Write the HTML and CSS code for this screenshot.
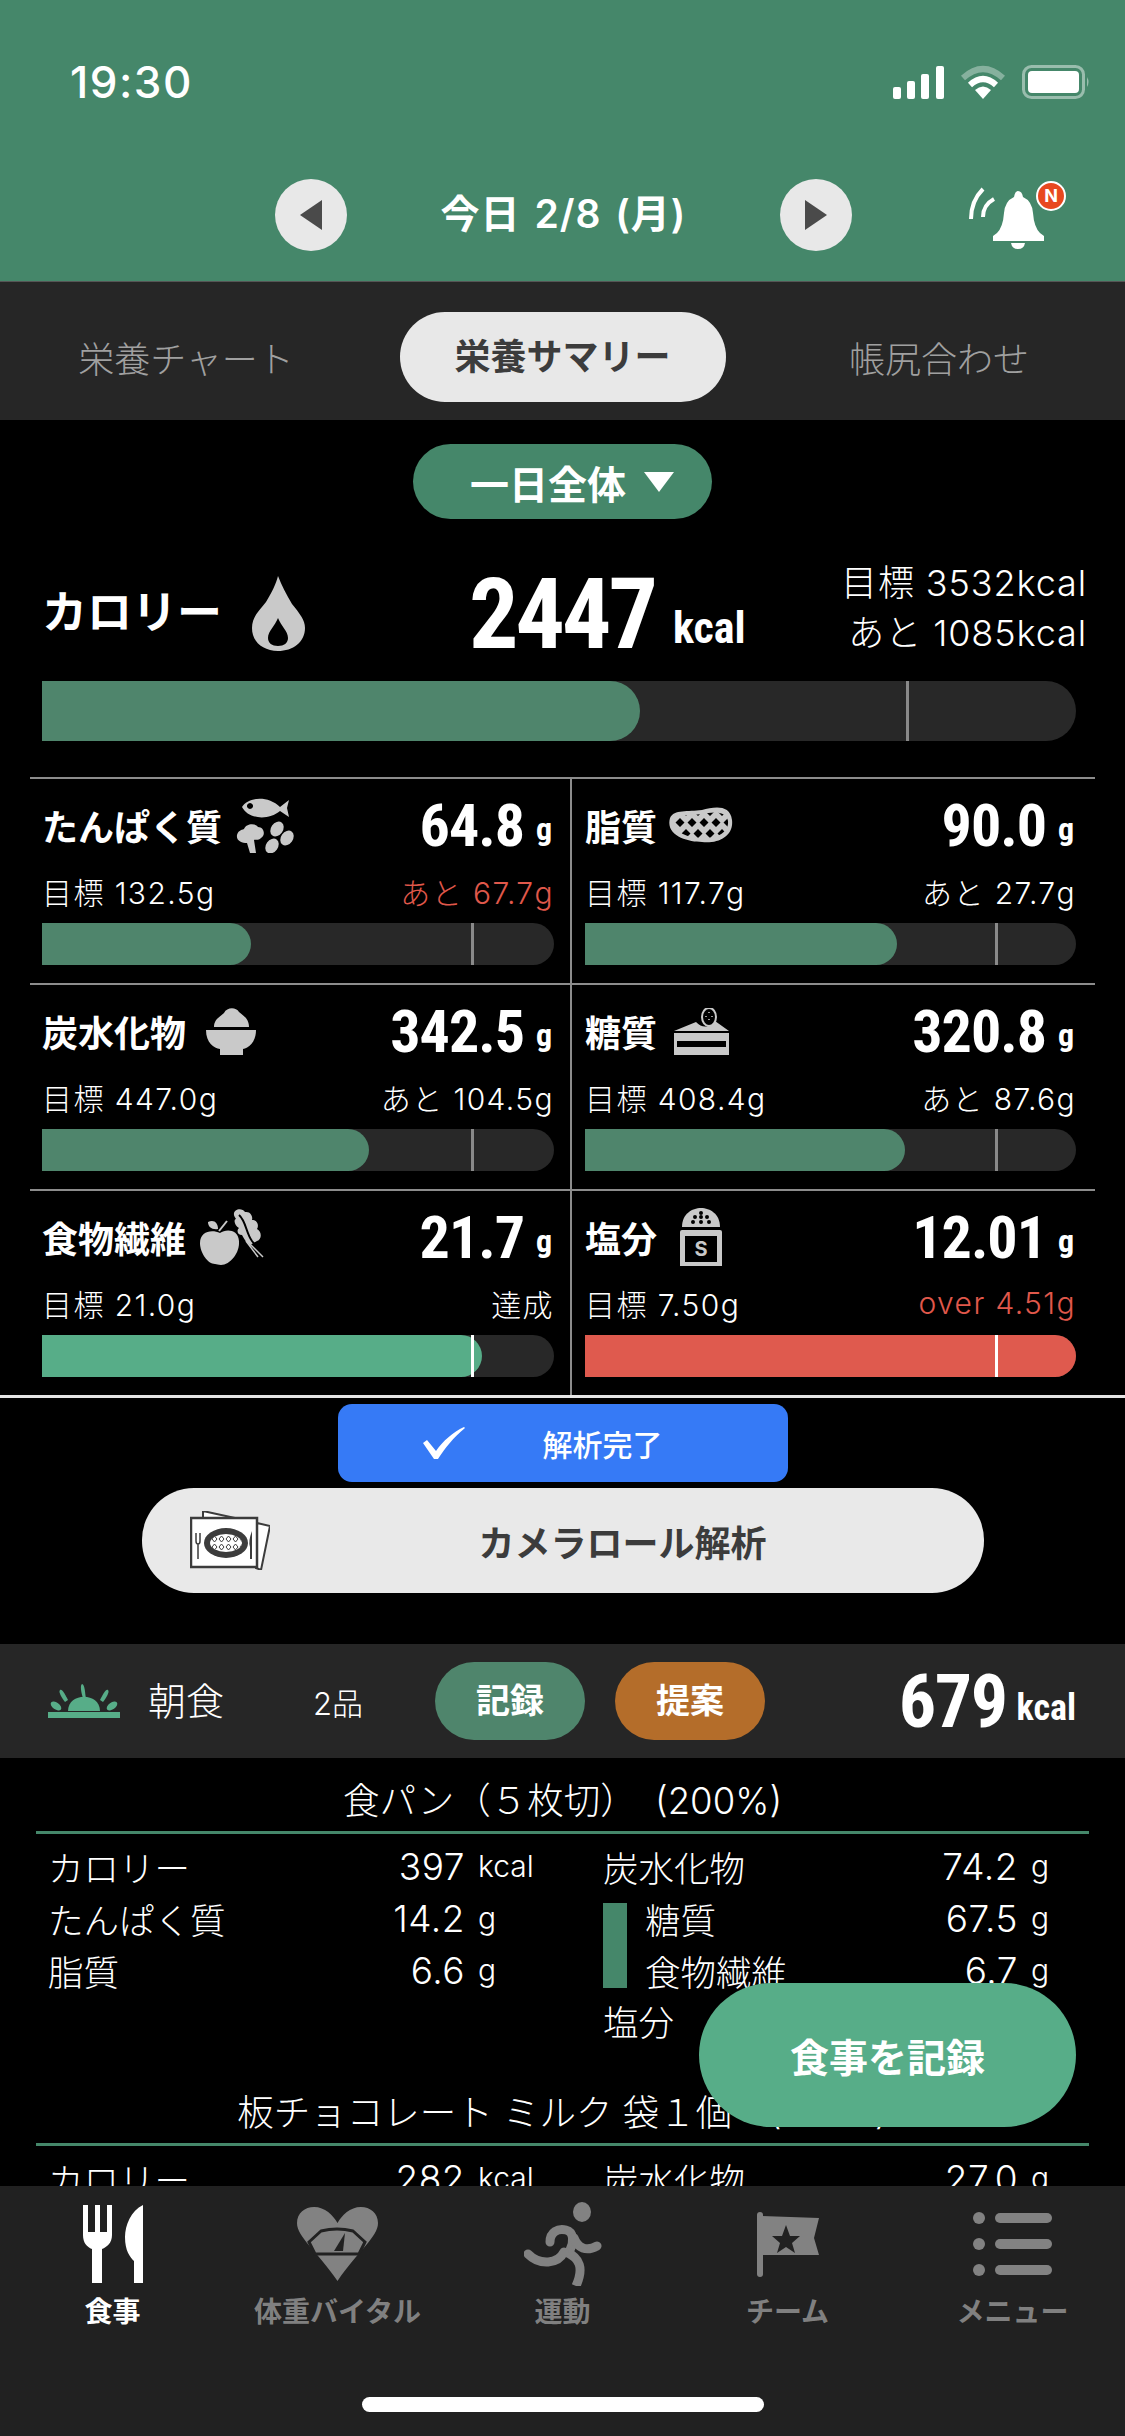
FILE: index.html
```html
<!DOCTYPE html>
<html lang="ja">

<head>
    <meta charset="UTF-8">
    <meta name="viewport" content="width=device-width, initial-scale=1.0">
    <title>栄養サマリー</title>
    <link rel="stylesheet" href="styles.css">
</head>

<body>
    <div class="phone">
        <header class="top">
            <div class="status-row">
                <span class="time">19:30</span>
                <div class="status-icons">
                    <svg width="51" height="33" viewBox="0 0 51 33" fill="#fff">
                        <rect x="0" y="21" width="8" height="12" rx="2" />
                        <rect x="14" y="15" width="8" height="18" rx="2" />
                        <rect x="28" y="8" width="8" height="25" rx="2" />
                        <rect x="43" y="0" width="8" height="33" rx="2" />
                    </svg>
                    <svg width="46" height="34" viewBox="0 0 46 34" fill="none" stroke="#fff" stroke-width="6">
                        <path d="M3 13 Q23 -5 43 13" opacity="0.35" />
                        <path d="M10 20 Q23 8 36 20" />
                        <path d="M23 34 L15 25 Q23 18 31 25 Z" fill="#fff" stroke="none" />
                    </svg>
                    <svg width="68" height="34" viewBox="0 0 68 34">
                        <rect x="1.5" y="1.5" width="60" height="31" rx="8" fill="none" stroke="#fff" stroke-width="3" opacity="0.45" />
                        <rect x="6" y="6" width="51" height="22" rx="4" fill="#fff" />
                        <path d="M65 12 Q68 17 65 22 Z" fill="#fff" opacity="0.45" />
                    </svg>
                </div>
            </div>
            <div class="date-row">
                <button class="round-button">
                    <svg width="22" height="30" viewBox="0 0 22 30"><path d="M22 0 V30 L0 15 Z" fill="#4a4a4a" /></svg>
                </button>
                <span class="date">今日 2/8 (月)</span>
                <button class="round-button">
                    <svg width="22" height="30" viewBox="0 0 22 30"><path d="M0 0 V30 L22 15 Z" fill="#4a4a4a" /></svg>
                </button>
                <div class="bell">
                    <svg width="97" height="68" viewBox="0 0 97 68">
                        <path d="M49 10 q4 0 5 6 q9 4 10 16 q1 14 7 20 l4 3 v5 H24 v-5 l4 -3 q6 -6 7 -20 q1 -12 10 -16 q1 -6 4 -6z" fill="#fff" />
                        <path d="M42 62 h14 q-1 6 -7 6 q-6 0 -7 -6z" fill="#fff" />
                        <path d="M14 8 Q2 20 2 38 M25 18 Q14 24 14 36" fill="none" stroke="#fff" stroke-width="4" />
                    </svg>
                    <span class="badge">N</span>
                </div>
            </div>
        </header>

        <nav class="tabs">
            <span class="tab">栄養チャート</span>
            <span class="tab tab-active">栄養サマリー</span>
            <span class="tab">帳尻合わせ</span>
        </nav>

        <main class="content">
            <div class="range-row">
                <div class="range-button">一日全体<span class="range-arrow"></span></div>
            </div>

            <section class="calorie-row">
                <span class="calorie-name">カロリー</span>
                <svg class="calorie-icon" width="53" height="75" viewBox="0 0 53 75">
                    <path fill-rule="evenodd" d="M26 0 C30 10 34 18 40 28 C48 38 53 44 53 52 C53 66 41 75 26 75 C11 75 0 66 0 52 C0 40 8 34 14 26 C20 16 24 8 26 0z M26 42 c3 8 10 13 10 20 c0 5 -4 8 -10 8 s-10 -3 -10 -8 c0 -7 7 -12 10 -20z" fill="#c9c9c9" />
                </svg>
                <span class="calorie-value">2447</span>
                <span class="calorie-unit">kcal</span>
                <div class="calorie-goal">
                    <div>目標 3532kcal</div>
                    <div>あと 1085kcal</div>
                </div>
            </section>
            <div class="bar bar-large">
                <div class="bar-fill" style="width: 57.8%"></div>
                <div class="bar-mark" style="left: 83.6%"></div>
            </div>

            <section class="nutrient-grid">
                <div class="cell cell-left">
                    <div class="name-row">
                        <span class="name">たんぱく質</span>
                        <svg class="icon-protein" width="58" height="56" viewBox="0 0 58 56" fill="#c9c9c9">
                            <path fill-rule="evenodd" d="M6 10 C12 0 32 -2 44 10 L53 3 L51 11 L53 20 L44 14 C32 24 12 22 6 10z M14 6 a3 3 0 1 0 0.01 0z" />
                            <path d="M8 32 C10 26 20 26 22 30 C28 30 30 38 25 41 C22 44 19 42 18 43 L20 56 H14 L11 46 C6 46 0 44 1 38 C2 34 5 33 8 32z" />
                            <ellipse cx="41" cy="32" rx="6" ry="8" transform="rotate(35 41 32)" />
                            <ellipse cx="51" cy="41" rx="6" ry="8" transform="rotate(35 51 41)" />
                            <ellipse cx="36" cy="49" rx="6" ry="8" transform="rotate(35 36 49)" />
                        </svg>
                        <span class="value">64.8</span><span class="unit">g</span>
                    </div>
                    <div class="sub-row"><span>目標 132.5g</span><span class="warn">あと 67.7g</span></div>
                    <div class="bar">
                        <div class="bar-fill" style="width: 40.8%"></div>
                        <div class="bar-mark" style="left: 83.7%"></div>
                    </div>
                </div>
                <div class="cell cell-right">
                    <div class="name-row">
                        <span class="name">脂質</span>
                        <svg class="icon-steak" width="65" height="38" viewBox="0 0 65 38">
                            <defs>
                                <pattern id="lattice" width="12" height="22" patternUnits="userSpaceOnUse">
                                    <path d="M6 1 L10.5 5.5 L6 10 L1.5 5.5 Z M0 12 L4.5 16.5 L0 21 Z M12 12 L12 21 L7.5 16.5 Z" fill="#000" />
                                </pattern>
                            </defs>
                            <path d="M2 12 C6 3 20 6 34 4 C46 1 62 -2 64 14 C66 30 50 38 34 36 C20 36 -3 30 2 12z" fill="#c9c9c9" />
                            <path d="M7 13 C10 8 22 10 34 8 C44 6 58 4 60 15 C61 27 48 33 34 32 C22 32 3 27 7 13z" fill="url(#lattice)" />
                        </svg>
                        <span class="value">90.0</span><span class="unit">g</span>
                    </div>
                    <div class="sub-row"><span>目標 117.7g</span><span>あと 27.7g</span></div>
                    <div class="bar">
                        <div class="bar-fill" style="width: 63.6%"></div>
                        <div class="bar-mark" style="left: 83.5%"></div>
                    </div>
                </div>

                <div class="cell cell-left">
                    <div class="name-row">
                        <span class="name">炭水化物</span>
                        <svg class="icon-rice" width="50" height="48" viewBox="0 0 50 48" fill="#c9c9c9">
                            <path d="M8 20 C8 12 14 10 18 6 C21 0 30 0 33 5 C38 9 43 12 43 20 z" />
                            <path d="M0 23 H50 C50 36 42 41 37 42 V48 H14 V42 C8 41 0 36 0 23z" />
                        </svg>
                        <span class="value">342.5</span><span class="unit">g</span>
                    </div>
                    <div class="sub-row"><span>目標 447.0g</span><span>あと 104.5g</span></div>
                    <div class="bar">
                        <div class="bar-fill" style="width: 63.9%"></div>
                        <div class="bar-mark" style="left: 83.7%"></div>
                    </div>
                </div>
                <div class="cell cell-right">
                    <div class="name-row">
                        <span class="name">糖質</span>
                        <svg class="icon-cake" width="55" height="47" viewBox="0 0 55 47">
                            <path d="M0 23 L22 14 Q28 20 34 18 Q38 17 41 13 L55 23 Z" fill="#c9c9c9" />
                            <ellipse cx="35" cy="9" rx="7" ry="9" fill="#000" stroke="#c9c9c9" stroke-width="2" />
                            <path d="M35 4 v1 M32 8 v1 M38 8 v1 M35 11 v1" stroke="#c9c9c9" stroke-width="1.5" />
                            <path fill-rule="evenodd" d="M0 25 H55 V47 H0 Z M3 33 V39 H52 V33 Z" fill="#c9c9c9" />
                        </svg>
                        <span class="value">320.8</span><span class="unit">g</span>
                    </div>
                    <div class="sub-row"><span>目標 408.4g</span><span>あと 87.6g</span></div>
                    <div class="bar">
                        <div class="bar-fill" style="width: 65.2%"></div>
                        <div class="bar-mark" style="left: 83.5%"></div>
                    </div>
                </div>

                <div class="cell cell-left">
                    <div class="name-row">
                        <span class="name">食物繊維</span>
                        <svg class="icon-apple" width="64" height="56" viewBox="0 0 64 56" fill="#c9c9c9">
                            <path d="M20 24 C26 20 38 20 39 32 C40 44 30 56 21 56 C18 56 17 55 15 55 C8 55 0 44 0 34 C0 22 12 20 20 24z" />
                            <path d="M8 13 C14 10 18 14 18 20 C12 21 8 18 8 13z" />
                            <path d="M19 22 L27 12" stroke="#c9c9c9" stroke-width="2" />
                            <path d="M34 6 C33 0 42 -2 45 3 C51 2 53 8 52 11 C58 11 59 17 57 20 C62 23 62 30 57 32 L50 36 C46 33 44 30 42 26 C38 26 36 22 39 19 C35 17 33 11 36 10 C35 8 34 7 34 6z" />
                            <path d="M39 6 C46 12 46 24 52 32 L63 46" fill="none" stroke="#000" stroke-width="2" />
                            <path d="M50 35 L63 48 M46 32 L58 48" fill="none" stroke="#c9c9c9" stroke-width="1.5" />
                        </svg>
                        <span class="value">21.7</span><span class="unit">g</span>
                    </div>
                    <div class="sub-row"><span>目標 21.0g</span><span>達成</span></div>
                    <div class="bar">
                        <div class="bar-fill bar-fill-done" style="width: 86%"></div>
                        <div class="bar-mark bar-mark-light" style="left: 83.7%"></div>
                    </div>
                </div>
                <div class="cell cell-right">
                    <div class="name-row">
                        <span class="name">塩分</span>
                        <div class="icon-shaker">
                            <svg width="42" height="58" viewBox="0 0 42 58">
                                <path d="M2 19 C2 6 12 0 21 0 C30 0 40 6 40 19z" fill="#c9c9c9" />
                                <path d="M21 5 v0 M15 9 v0 M21 9 v0 M27 9 v0 M13 14 v0 M21 14 v0 M29 14 v0" stroke="#000" stroke-width="4" stroke-linecap="round" />
                                <path d="M0 24 Q0 22 2 22 H40 Q42 22 42 24 V58 H0 Z" fill="#c9c9c9" />
                                <rect x="5" y="28" width="32" height="26" fill="#000" />
                            </svg>
                            <span class="shaker-letter">S</span>
                        </div>
                        <span class="value">12.01</span><span class="unit">g</span>
                    </div>
                    <div class="sub-row"><span>目標 7.50g</span><span class="warn">over 4.51g</span></div>
                    <div class="bar">
                        <div class="bar-fill bar-fill-over" style="width: 100%"></div>
                        <div class="bar-mark bar-mark-light" style="left: 83.5%"></div>
                    </div>
                </div>
            </section>

            <div class="done-row">
                <div class="done-button">
                    <svg width="42" height="32" viewBox="0 0 42 32"><path d="M0 16 L4 13 L13 24 C20 14 30 5 41 0 L42 1 C30 11 22 21 15 32 H11 Z" fill="#fff" /></svg>
                    <span>解析完了</span>
                </div>
            </div>
            <div class="camera-row">
                <div class="camera-button">
                    <svg width="80" height="59" viewBox="0 0 80 59">
                        <defs>
                            <pattern id="lattice-small" width="7" height="8" patternUnits="userSpaceOnUse">
                                <path d="M3.5 1 L6 4 L3.5 7 L1 4 Z" fill="none" stroke="#3c3c3c" stroke-width="1" />
                            </pattern>
                        </defs>
                        <path d="M13 0 L45 7 H13 Z" fill="#fff" stroke="#3c3c3c" stroke-width="2" />
                        <path d="M67 12 L80 15 L71 59 L66 57 Z" fill="#fff" stroke="#3c3c3c" stroke-width="2" />
                        <rect x="1" y="7" width="66" height="49" fill="#fff" stroke="#3c3c3c" stroke-width="2.5" />
                        <ellipse cx="36" cy="32" rx="22" ry="15" fill="#3c3c3c" />
                        <ellipse cx="36" cy="32" rx="16" ry="9" fill="#fff" />
                        <ellipse cx="36" cy="32" rx="16" ry="9" fill="url(#lattice-small)" />
                        <path d="M6 22 V30 Q6 33 8 33 V48 M10 22 V30 Q10 33 8 33" fill="none" stroke="#3c3c3c" stroke-width="1.5" />
                        <path d="M62 20 Q58 30 60 36 V48 H62 Z" fill="#3c3c3c" />
                    </svg>
                    <span class="camera-label">カメラロール解析</span>
                </div>
            </div>

            <section class="meal-head">
                <svg class="meal-icon" width="72" height="34" viewBox="0 0 72 34" fill="#57ad88">
                    <rect x="0" y="28" width="72" height="6" />
                    <path d="M20 27 C20 8 52 8 52 27 Z" />
                    <path d="M25 2 C28 2 28 12 29 16 L26 16 C24 10 23 3 25 2z" transform="translate(9 -2)" />
                    <path d="M12 6 C14 4 18 12 20 16 L17 18 C14 14 10 8 12 6z" />
                    <path d="M60 6 C58 4 54 12 52 16 L55 18 C58 14 62 8 60 6z" />
                    <ellipse cx="8" cy="22" rx="6" ry="3.5" transform="rotate(35 8 22)" />
                    <ellipse cx="64" cy="22" rx="6" ry="3.5" transform="rotate(-35 64 22)" />
                </svg>
                <span class="meal-name">朝食</span>
                <span class="meal-count">2品</span>
                <span class="meal-button meal-record">記録</span>
                <span class="meal-button meal-suggest">提案</span>
                <span class="meal-kcal">679</span><span class="meal-unit">kcal</span>
            </section>

            <section class="food">
                <h2 class="food-title">食パン（５枚切）　(200%)</h2>
                <div class="food-table">
                    <div class="food-col">
                        <div class="food-line"><span class="food-label">カロリー</span><span class="food-value">397</span><span class="food-unit food-unit-kcal">kcal</span></div>
                        <div class="food-line"><span class="food-label">たんぱく質</span><span class="food-value">14.2</span><span class="food-unit">g</span></div>
                        <div class="food-line"><span class="food-label">脂質</span><span class="food-value">6.6</span><span class="food-unit">g</span></div>
                    </div>
                    <div class="food-col">
                        <div class="food-line"><span class="food-label">炭水化物</span><span class="food-value">74.2</span><span class="food-unit">g</span></div>
                        <div class="food-group">
                            <div class="food-mark"></div>
                            <div class="food-group-lines">
                                <div class="food-line"><span class="food-label">糖質</span><span class="food-value">67.5</span><span class="food-unit">g</span></div>
                                <div class="food-line"><span class="food-label">食物繊維</span><span class="food-value">6.7</span><span class="food-unit">g</span></div>
                            </div>
                        </div>
                        <div class="food-line food-line-last"><span class="food-label">塩分</span><span class="food-value">1.5</span><span class="food-unit">g</span></div>
                    </div>
                </div>
            </section>

            <section class="food">
                <h2 class="food-title">板チョコレート ミルク 袋１個　(100%)</h2>
                <div class="food-table">
                    <div class="food-col">
                        <div class="food-line"><span class="food-label">カロリー</span><span class="food-value">282</span><span class="food-unit food-unit-kcal">kcal</span></div>
                    </div>
                    <div class="food-col">
                        <div class="food-line"><span class="food-label">炭水化物</span><span class="food-value">27.0</span><span class="food-unit">g</span></div>
                    </div>
                </div>
            </section>
        </main>

        <button class="record-button">食事を記録</button>

        <footer class="bottom-nav">
            <div class="nav-items">
                <div class="nav-item nav-item-active">
                    <div class="nav-icon">
                        <svg width="60" height="78" viewBox="0 0 60 78" fill="#fff">
                            <path d="M0 0 H5 V27 H12 V0 H17 V27 H24 V0 H29 V30 C29 38 24 42 19 44 V78 H9 V44 C4 42 0 38 0 30 Z" />
                            <path d="M60 0 C48 6 42 20 42 32 C42 46 47 52 51 56 V78 H60 Z" />
                        </svg>
                    </div>
                    <span>食事</span>
                </div>
                <div class="nav-item">
                    <div class="nav-icon">
                        <svg width="81" height="74" viewBox="0 0 81 74">
                            <path d="M40.5 74 C20 44 0 30 0 16 C0 6 8 0 17 0 C28 0 36 8 40.5 16 C45 8 53 0 64 0 C73 0 81 6 81 16 C81 30 61 44 40.5 74z" fill="#828282" />
                            <path d="M12 35 L24 24 Q40 20 56 24 L68 35 L62 47 H18 Z" fill="none" stroke="#212121" stroke-width="3" />
                            <path d="M48 26 L37 44 H46 Z" fill="#212121" />
                        </svg>
                    </div>
                    <span>体重バイタル</span>
                </div>
                <div class="nav-item">
                    <div class="nav-icon">
                        <svg width="78" height="84" viewBox="0 0 78 84" fill="none" stroke="#828282" stroke-width="9" stroke-linecap="round">
                            <ellipse cx="58" cy="10" rx="9" ry="10" fill="#828282" stroke="none" />
                            <path d="M26 40 C26 30 34 26 42 28 C50 30 50 40 46 48" />
                            <path d="M50 36 C54 46 62 50 73 44" />
                            <path d="M42 50 C56 56 60 66 52 84" stroke-linecap="butt" />
                            <path d="M40 50 C34 62 16 64 4 52" />
                        </svg>
                    </div>
                    <span>運動</span>
                </div>
                <div class="nav-item">
                    <div class="nav-icon">
                        <svg width="62" height="65" viewBox="0 0 62 65">
                            <rect x="0" y="0" width="6" height="65" rx="3" fill="#828282" />
                            <path d="M5 4 L62 6 L57 26 L62 43 H5 Z" fill="#828282" />
                            <path d="M29 13 L33 24 L43 24 L35 31 L38 41 L29 35 L20 41 L23 31 L15 24 L25 24 Z" fill="#212121" />
                        </svg>
                    </div>
                    <span>チーム</span>
                </div>
                <div class="nav-item">
                    <div class="nav-icon">
                        <svg width="79" height="65" viewBox="0 0 79 65" fill="#828282">
                            <ellipse cx="6" cy="6" rx="6" ry="6" />
                            <rect x="22" y="1" width="57" height="10" rx="5" />
                            <ellipse cx="6" cy="32" rx="6" ry="6" />
                            <rect x="22" y="27" width="57" height="10" rx="5" />
                            <ellipse cx="6" cy="58" rx="6" ry="6" />
                            <rect x="22" y="53" width="57" height="10" rx="5" />
                        </svg>
                    </div>
                    <span>メニュー</span>
                </div>
            </div>
            <div class="home-indicator"></div>
        </footer>
    </div>
</body>

</html>
```

FILE: styles.css
```css
body {
    margin: 0;
    background-color: #000;
    font-family: Inter, 'Noto Sans CJK JP', sans-serif;
    color: #fff;
}

.phone {
    position: relative;
    display: flex;
    flex-direction: column;
    width: 1125px;
    height: 2436px;
    overflow: hidden;
}

/* header */
.top {
    flex: none;
    height: 282px;
    padding-top: 60px;
    box-sizing: border-box;
    background-color: #45876a;
    border-bottom: 1px solid #555;
}

.status-row {
    display: flex;
    justify-content: space-between;
    align-items: center;
    height: 44px;
    padding: 0 35px 0 70px;
}

.time {
    font-size: 44px;
    font-weight: 500;
    letter-spacing: 1.5px;
}

.status-icons {
    display: flex;
    align-items: center;
    gap: 16px;
}

.date-row {
    display: flex;
    align-items: center;
    margin-top: 75px;
    padding-left: 275px;
}

.round-button {
    display: flex;
    align-items: center;
    justify-content: center;
    width: 72px;
    height: 72px;
    padding: 0;
    border: none;
    border-radius: 50%;
    background-color: #e8e8e8;
}

.date {
    width: 433px;
    padding-bottom: 8px;
    text-align: center;
    font-size: 39px;
    font-weight: 600;
    letter-spacing: 1px;
    word-spacing: 3px;
}

.bell {
    position: relative;
    display: flex;
    margin-left: 117px;
}

.badge {
    position: absolute;
    top: 0;
    right: 0;
    width: 26px;
    height: 26px;
    border: 2px solid #fff;
    border-radius: 50%;
    background-color: #e8481f;
    font-size: 18px;
    font-weight: 700;
    line-height: 26px;
    text-align: center;
}

/* tabs */
.tabs {
    flex: none;
    display: grid;
    grid-template-columns: 372px 1fr 372px;
    align-items: center;
    justify-items: center;
    height: 138px;
    padding-top: 12px;
    box-sizing: border-box;
    background-color: #262626;
}

.tab {
    font-size: 36px;
    font-weight: 300;
    color: #a0a0a0;
}

.tab-active {
    width: 326px;
    height: 90px;
    border-radius: 45px;
    background-color: #e8e8e8;
    color: #3c3c3c;
    font-weight: 700;
    line-height: 90px;
    text-align: center;
}

/* scroll area */
.content {
    flex: 1;
    min-height: 0;
    overflow: hidden;
}

.range-row {
    display: flex;
    justify-content: center;
    padding-top: 24px;
}

.range-button {
    display: flex;
    align-items: center;
    justify-content: center;
    gap: 18px;
    width: 299px;
    height: 75px;
    border-radius: 38px;
    background-color: #45876a;
    font-size: 39px;
    font-weight: 700;
    padding-left: 19px;
    box-sizing: border-box;
}

.range-arrow {
    width: 0;
    height: 0;
    border-left: 15px solid transparent;
    border-right: 15px solid transparent;
    border-top: 20px solid #fff;
}

.calorie-row {
    display: flex;
    align-items: center;
    height: 162px;
    padding-left: 42px;
}

.calorie-name {
    width: 210px;
    margin-top: 18px;
    font-size: 45px;
    font-weight: 700;
}

.calorie-icon {
    flex: none;
    margin-top: 27px;
}

.calorie-value {
    width: 188px;
    margin-left: 164px;
    margin-top: 28px;
    font-family: 'Roboto Condensed', Roboto, sans-serif;
    font-stretch: 75%;
    font-size: 98px;
    font-weight: 700;
    letter-spacing: -3px;
}

.calorie-unit {
    margin-left: 16px;
    margin-top: 56px;
    font-family: 'Roboto Condensed', Roboto, sans-serif;
    font-stretch: 75%;
    font-size: 44px;
    font-weight: 700;
}

.calorie-goal {
    margin-left: auto;
    margin-top: 16px;
    padding-right: 38px;
    font-size: 36px;
    font-weight: 300;
    letter-spacing: 0.9px;
    line-height: 50px;
    text-align: right;
    white-space: nowrap;
}

.bar {
    position: relative;
    height: 42px;
    border-radius: 0 21px 21px 0;
    background-color: #282828;
}

.bar-large {
    height: 60px;
    margin: 0 49px 0 42px;
    border-radius: 0 30px 30px 0;
}

.bar-fill {
    height: 100%;
    border-radius: 0 30px 30px 0;
    background-color: #4f856c;
}

.bar-fill-done {
    background-color: #57ad88;
}

.bar-fill-over {
    background-color: #df5a4e;
}

.bar-mark {
    position: absolute;
    top: 0;
    width: 3px;
    height: 100%;
    background-color: #8a8a8a;
}

.bar-mark-light {
    background-color: #fff;
}

/* nutrient cells */
.nutrient-grid {
    display: grid;
    grid-template-columns: 540px 525px;
    margin: 36px 30px 0;
}

.cell {
    height: 206px;
    box-sizing: border-box;
    border-top: 2px solid #8c8c8c;
}

.cell-left {
    padding: 0 16px 0 12px;
}

.cell-right {
    padding: 0 19px 0 13px;
    border-left: 2px solid #8c8c8c;
}

.name-row {
    display: flex;
    align-items: center;
    height: 92px;
}

.name {
    font-size: 36px;
    font-weight: 700;
}

.icon-protein { margin-left: 14px; }
.icon-steak { margin-left: 11px; }
.icon-rice { margin-left: 20px; }
.icon-cake { margin-left: 17px; }
.icon-apple { margin-left: 14px; }

.icon-shaker {
    position: relative;
    display: flex;
    margin-left: 23px;
}

.shaker-letter {
    position: absolute;
    top: 28px;
    left: 5px;
    width: 32px;
    height: 26px;
    color: #c9c9c9;
    font-size: 20px;
    font-weight: 700;
    line-height: 26px;
    text-align: center;
}

.value {
    margin-left: auto;
    font-family: 'Roboto Condensed', Roboto, sans-serif;
    font-stretch: 75%;
    font-size: 60px;
    font-weight: 700;
    letter-spacing: -1px;
}

.unit {
    width: 18px;
    margin-left: 12px;
    margin-top: 8px;
    font-family: 'Roboto Condensed', Roboto, sans-serif;
    font-stretch: 75%;
    font-size: 32px;
    font-weight: 700;
}

.sub-row {
    display: flex;
    justify-content: space-between;
    align-items: center;
    height: 40px;
    margin-bottom: 12px;
    font-size: 30px;
    font-weight: 300;
    letter-spacing: 1.4px;
    white-space: nowrap;
}

.warn {
    color: #e0584b;
}

/* analyse buttons */
.done-row {
    display: flex;
    justify-content: center;
    padding-top: 6px;
    border-top: 3px solid #e5e5e5;
}

.done-button {
    display: flex;
    align-items: center;
    width: 450px;
    height: 78px;
    padding-left: 85px;
    box-sizing: border-box;
    border-radius: 14px;
    background-color: #367af6;
    font-size: 30px;
    font-weight: 500;
}

.done-button span {
    margin-left: 78px;
}

.camera-row {
    display: flex;
    justify-content: center;
    padding-top: 6px;
}

.camera-button {
    display: flex;
    align-items: center;
    width: 842px;
    height: 105px;
    padding-left: 48px;
    box-sizing: border-box;
    border-radius: 52px;
    background-color: #e9e9e9;
}

.camera-label {
    margin-left: 209px;
    color: #3c3c3c;
    font-size: 36px;
    font-weight: 700;
}

/* meal */
.meal-head {
    display: flex;
    align-items: center;
    height: 114px;
    margin-top: 51px;
    padding-left: 48px;
    background-color: #262626;
}

.meal-name {
    width: 77px;
    margin-left: 28px;
    padding-bottom: 5px;
    font-size: 38px;
    font-weight: 300;
}

.meal-count {
    width: 50px;
    margin-left: 88px;
    font-size: 31px;
    font-weight: 300;
    white-space: nowrap;
}

.meal-button {
    width: 150px;
    height: 78px;
    border-radius: 39px;
    font-size: 34px;
    font-weight: 700;
    line-height: 78px;
    text-align: center;
}

.meal-record {
    margin-left: 72px;
    background-color: #4f856c;
}

.meal-suggest {
    margin-left: 30px;
    background-color: #b46d2a;
}

.meal-kcal {
    margin-left: auto;
    font-family: 'Roboto Condensed', Roboto, sans-serif;
    font-stretch: 75%;
    font-size: 74px;
    font-weight: 700;
    letter-spacing: -1.5px;
}

.meal-unit {
    margin-left: 10px;
    margin-top: 14px;
    padding-right: 49px;
    font-family: 'Roboto Condensed', Roboto, sans-serif;
    font-stretch: 75%;
    font-size: 36px;
    font-weight: 700;
}

.food {
    height: 312px;
}

.food-title {
    height: 76px;
    margin: 0 36px;
    box-sizing: border-box;
    border-bottom: 3px solid #45876a;
    font-size: 36.5px;
    font-weight: 300;
    line-height: 86px;
    text-align: center;
    white-space: nowrap;
}

.food-table {
    display: flex;
    padding: 6px 0 0 48px;
}

.food-col {
    width: 555px;
}

.food-col + .food-col {
    width: 444px;
}

.food-line {
    display: flex;
    align-items: center;
    height: 52px;
    font-weight: 300;
}

.food-line-last {
    margin-top: -2px;
}

.food-label {
    flex: 1;
    font-size: 35.5px;
}

.food-value {
    font-size: 37px;
    letter-spacing: 0.5px;
}

.food-unit {
    width: 57px;
    margin-left: 13px;
    font-size: 30px;
}

.food-col:first-child .food-line {
    width: 487px;
}

.food-col + .food-col .food-unit {
    width: 16px;
}

.food-group {
    display: flex;
}

.food-mark {
    width: 24px;
    margin: 11px 18px 8px 0;
    background-color: #45876a;
}

.food-group-lines {
    flex: 1;
}

.record-button {
    position: absolute;
    top: 1983px;
    left: 699px;
    width: 377px;
    height: 144px;
    padding: 0;
    border: none;
    border-radius: 72px;
    background-color: #57ad88;
    color: #fff;
    font-family: inherit;
    font-size: 39px;
    font-weight: 700;
}

/* bottom nav */
.bottom-nav {
    flex: none;
    height: 250px;
    background-color: #212121;
}

.nav-items {
    display: grid;
    grid-template-columns: repeat(5, 225px);
}

.nav-item {
    display: flex;
    flex-direction: column;
    align-items: center;
    color: #808080;
    font-size: 28px;
    font-weight: 700;
}

.nav-item-active {
    color: #fff;
}

.nav-icon {
    display: flex;
    align-items: center;
    justify-content: center;
    height: 84px;
    margin: 16px 0 4px;
}

.home-indicator {
    width: 402px;
    height: 15px;
    margin: 67px auto 0;
    border-radius: 8px;
    background-color: #fff;
}
```
